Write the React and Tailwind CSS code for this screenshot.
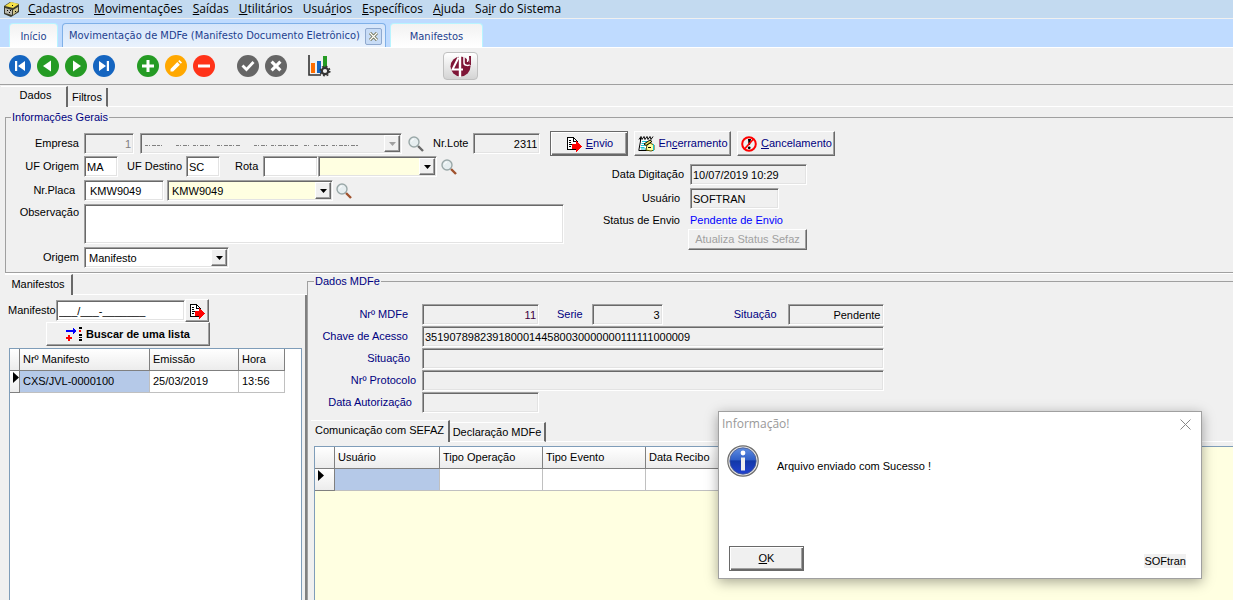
import React from 'react';

const menuItems = [
  ['', 'C', 'adastros'],
  ['', 'M', 'ovimentações'],
  ['', 'S', 'aídas'],
  ['', 'U', 'tilitários'],
  ['Usuá', 'r', 'ios'],
  ['', 'E', 'specíficos'],
  ['', 'A', 'juda'],
  ['Sa', 'i', 'r do Sistema'],
];

const sunken =
  'border border-t-[#a0a0a0] border-l-[#a0a0a0] border-r-white border-b-white shadow-[inset_1px_1px_0_#696969,inset_-1px_-1px_0_#e3e3e3]';
const raised =
  'border border-t-white border-l-white border-r-[#696969] border-b-[#696969] shadow-[inset_-1px_-1px_0_#a0a0a0] bg-[#f0f0f0]';
const raisedDefault =
  'border border-[#696969] shadow-[inset_1px_1px_0_#ffffff,inset_-1px_-1px_0_#696969,inset_-2px_-2px_0_#a0a0a0] bg-[#f0f0f0]';
const groupBox =
  'min-w-0 border border-r-0 border-[#a0a0a0] shadow-[0_1px_0_#ffffff]';

const Field = ({ className = '', pad = 'px-[2px]', ...props }) => (
  <input className={`h-[21px] min-w-0 leading-4 outline-none ${sunken} ${pad} ${className}`} {...props} />
);

const Combo = ({ className = '', selectClass = 'bg-white', value = '', disabled, children, ...props }) => (
  <div className={`relative h-[21px] ${className}`}>
    <select
      className={`block h-full w-full appearance-none px-1 leading-4 outline-none ${sunken} ${selectClass}`}
      defaultValue={value}
      disabled={disabled}
      {...props}
    >
      <option value={value}>{value}</option>
    </select>
    {children}
    <span className={`pointer-events-none absolute top-[2px] right-[2px] bottom-[2px] flex w-4 items-center justify-center ${raised}`}>
      <svg width="7" height="4" viewBox="0 0 7 4" fill={disabled ? '#a0a0a0' : '#000'}>
        <path d="M0 0h7L3.5 4z" />
      </svg>
    </span>
  </div>
);

const Search = ({ handle = '#a0522d', label }) => (
  <button type="button" aria-label={label} className="h-4 w-4 shrink-0">
    <svg width="16" height="16" viewBox="0 0 16 16" fill="none">
      <path d="M10 10l5 5" stroke={handle} strokeWidth="2.4" />
      <circle cx="6" cy="6" r="5" fill="#e6eef0" stroke="#9aa8a8" strokeWidth="1.4" />
      <path d="M3.5 5.5A3 3 0 0 1 6 3" stroke="#fff" />
    </svg>
  </button>
);

const SendIcon = () => (
  <svg width="16" height="16" viewBox="0 0 16 16" shapeRendering="crispEdges">
    <path d="M1 1h6l4 4v8H1z" fill="#fff" stroke="#000" />
    <path d="M7 1v4h4M3 4h2M3 6h2M3 8h3M3 10h2" stroke="#000" fill="none" />
    <path d="M6 8h4V5l6 5.500-6 5.500v-3H6z" fill="#f00" />
  </svg>
);

const NotepadIcon = () => (
  <svg width="17" height="17" viewBox="0 0 17 17" fill="none">
    <path d="M2.500 2.500h12L12 15.500H.5z" fill="#fff" />
    <path d="M2.500 3v3L.8 15.500H11" stroke="#000" />
    <path d="M1 4.500l2-3 1 3 2-3 1 3 2-3 1 3 2-3 1 3 2-3" stroke="#000" />
    <path d="M4 6.500h5M3.500 8.500h3M3 10.500h4M2.500 12.500h4M3 14h5" stroke="#19c5cf" />
    <path d="M9 10l3-2 4 2v5l-3 1-5-1z" fill="#ffffa0" stroke="#555500" />
    <path d="M6 9l6-4 2 1.500-6 4zM10 12.500h3" fill="#e0e060" stroke="#000" />
    <path d="M15.500 9v7" stroke="#19c5cf" />
  </svg>
);

const CancelIcon = () => (
  <svg width="16" height="16" viewBox="0 0 16 16" fill="none">
    <path d="M7 3h3l-1 6H7.500z" fill="#000" />
    <circle cx="8.200" cy="11.800" r="1.400" fill="#000" />
    <circle cx="8" cy="8" r="6.8" stroke="#f00" strokeWidth="2" />
    <path d="M12.500 3L3.500 13" stroke="#f00" strokeWidth="1.700" />
  </svg>
);

const circleIcons = [
  { label: 'Primeiro', color: '#1565c0', d: 'M6 6h2.200v10H6zM16 6v10L9 11z' },
  { label: 'Anterior', color: '#259b24', d: 'M14 5.500v11L6 11z' },
  { label: 'Próximo', color: '#259b24', d: 'M8 5.500v11L16 11z' },
  { label: 'Último', color: '#1565c0', d: 'M13.800 6H16v10h-2.200zM6 6v10l7-5z' },
  { label: 'Incluir', color: '#259b24', d: 'M9.500 5h3v4.500H17v3h-4.500V17h-3v-4.500H5v-3h4.500z', gap: true },
  { label: 'Alterar', color: '#ffa800', d: 'M5.500 16.500v-2.600l6.800-6.800 2.600 2.600-6.800 6.800zM13.200 6.200l1.200-1.200 2.600 2.600-1.200 1.200z' },
  { label: 'Excluir', color: '#ff3319', d: 'M5 9.500h12v3H5z' },
  { label: 'Confirmar', color: '#666666', d: 'M4.500 11.500l2-2 3 3L15.500 6l2 2-8 8.500z', gap: true },
  { label: 'Cancelar', color: '#666666', d: 'M5.500 7.700l2.200-2.200L11 8.800l3.300-3.300 2.200 2.200-3.300 3.300 3.300 3.300-2.200 2.200-3.300-3.300-3.300 3.300-2.200-2.200L8.800 11z' },
];

const AppIcon = () => (
  <svg width="16" height="16" viewBox="0 0 16 16">
    <path d="M0 5l6-4 9 2v8l-8 5-7-3z" fill="#3a3a2c" />
    <path d="M1 5l6-4 8 2-6 4z" fill="#f4e04a" />
    <path d="M1 7l7 2v5l-7-2z" fill="#b8b8b0" />
    <path d="M9 9l5-3v4l-5 4z" fill="#cfc48a" />
    <path d="M3 9h1v1H3zM5 11h1v1H5zM6 9h1v1H6zM11 10h1v1h-1zM8 4h1v1H8z" fill="#000" />
  </svg>
);

const ChartIcon = () => (
  <svg width="23" height="22" viewBox="0 0 23 22" fill="none">
    <path d="M1 0v20h12" stroke="#333" strokeWidth="1.600" />
    <path d="M3 8h4v10H3z" fill="#ff6d00" />
    <path d="M9 6h4v12H9z" fill="#1565c0" />
    <path d="M15 1h4v11h-4z" fill="#259b24" />
    <circle cx="17" cy="16" r="3.200" stroke="#333" strokeWidth="2.200" fill="#f0f0f0" />
    <circle cx="17" cy="16" r="4.800" stroke="#333" strokeWidth="1.500" strokeDasharray="1.900 1.870" />
  </svg>
);

const LogoIcon = () => (
  <svg width="21" height="21" viewBox="0 0 21 21" fill="none">
    <ellipse cx="10.500" cy="10.500" rx="10" ry="10" fill="#7f1637" />
    <path d="M8.500 1.500L2.500 13.500H13" stroke="#fff" strokeWidth="2" />
    <path d="M10 0v21" stroke="#fff" strokeWidth="2.400" />
    <path d="M14 1v6c0 3 6 3 6 1" stroke="#fff" strokeWidth="1.500" />
    <path d="M17.500 0v6" stroke="#fff" strokeWidth="1.200" />
    <path d="M19 0h2v9h-1.500z" fill="#7f1637" />
  </svg>
);

const InfoIcon = () => (
  <svg width="32" height="32" viewBox="0 0 32 32">
    <defs>
      <linearGradient id="infoBlue" x1="0" y1="0" x2="0" y2="1">
        <stop offset="0" stopColor="#5f8de0" />
        <stop offset="0.450" stopColor="#2f5fc8" />
        <stop offset="0.500" stopColor="#1238a8" />
        <stop offset="1" stopColor="#2142d0" />
      </linearGradient>
    </defs>
    <circle cx="16" cy="16" r="15.200" fill="#e8e8e8" stroke="#6c6c6c" strokeWidth="1.200" />
    <circle cx="16" cy="16" r="13.200" fill="url(#infoBlue)" stroke="#4a5a90" strokeWidth="0.800" />
    <circle cx="16" cy="8" r="2.400" fill="#fff" />
    <path d="M14 12.500h4v13h-4z" fill="#eee" />
  </svg>
);

const RowMark = () => (
  <td className="border-r border-b border-[#808080] bg-linear-to-b from-white to-[#ececec] pt-px pl-[3px] align-top">
    <svg width="6" height="11" viewBox="0 0 6 11">
      <path d="M0 0l6 5.500L0 11z" />
    </svg>
  </td>
);

const GridHead = ({ children, className = '' }) => (
  <th className={`h-[22px] border-r border-b border-[#808080] bg-linear-to-b from-white to-[#ececec] px-[3px] text-left font-normal ${className}`}>
    {children}
  </th>
);

const GridCell = ({ children, className = 'bg-white' }) => (
  <td className={`h-[22px] border-r border-b border-[#c0c0c0] px-[3px] ${className}`}>{children}</td>
);

const TopBar = () => (
  <header>
    <nav className="flex h-[18px] items-center bg-[#c3daf0] pl-1 font-['Open_Sans','Noto_Sans',sans-serif] text-[12px] leading-4">
      <AppIcon />
      <div className="ml-2 flex gap-[10px]">
        {menuItems.map(([before, key, after]) => (
          <a href="#" key={key + after} className="whitespace-nowrap">
            {before}<u>{key}</u>{after}
          </a>
        ))}
      </div>
    </nav>
    <div className="flex h-[30px] items-end gap-1 border-t border-b border-t-[#f0f0f0] border-b-white bg-[#bfdbff] pl-[9px] font-['DejaVu_Sans_Condensed','DejaVu_Sans',sans-serif] text-[11px] text-[#1e3f8f]">
      <button type="button" className="h-6 w-[49px] rounded-t-sm border border-b-0 border-[#b8f4ff] bg-linear-to-b from-[#f2f2f2] to-white pt-1">Início</button>
      <div className="flex h-6 w-[324px] items-center justify-between rounded-t-sm border border-b-0 border-[#7fb0e8] bg-linear-to-b from-[#d5e5fa] to-[#e9f2fd] pt-px pr-[3px] pl-[6px]">
        <button type="button" className="pt-px whitespace-nowrap">Movimentação de MDFe (Manifesto Documento Eletrônico)</button>
        <button type="button" aria-label="Fechar aba" className="flex h-[17px] w-[17px] items-center justify-center rounded-xs border border-[#8fa9cf] bg-[#c8dcf6]">
          <svg width="9" height="9" viewBox="0 0 9 9" fill="none">
            <path d="M1 1l7 7M8 1L1 8" stroke="#6b6b4a" strokeWidth="3" />
            <path d="M1 1l7 7M8 1L1 8" stroke="#fff" strokeWidth="1.300" />
          </svg>
        </button>
      </div>
      <button type="button" className="h-6 w-[93px] rounded-t-sm border border-b-0 border-[#b8f4ff] bg-linear-to-b from-[#f2f2f2] to-white pt-1">Manifestos</button>
    </div>
    <div className="flex h-[37px] items-center border-b border-[#a0a0a0] pl-[9px]">
      {circleIcons.map((icon) => (
        <button type="button" key={icon.label} aria-label={icon.label} className={`mr-[6px] h-[22px] w-[22px] ${icon.gap ? 'ml-4' : ''}`}>
          <svg width="22" height="22" viewBox="0 0 22 22">
            <circle cx="11" cy="11" r="11" fill={icon.color} />
            <path d={icon.d} fill="#fff" />
          </svg>
        </button>
      ))}
      <button type="button" aria-label="Gráficos" className="ml-[15px]"><ChartIcon /></button>
      <button type="button" aria-label="4S" className="ml-28 flex h-7 w-[35px] items-center justify-center rounded-sm border border-[#c0c0c0] bg-linear-to-b from-white to-[#d4d4d4]">
        <LogoIcon />
      </button>
    </div>
  </header>
);

const GeneralInfo = () => (
  <fieldset className={`${groupBox} mt-[3px] ml-1 pb-1`}>
    <legend className="ml-[5px] h-[14px] px-px leading-[14px] text-[#000080]">Informações Gerais</legend>
    <div className="flex items-center pt-[7px]">
      <label htmlFor="empresa" className="mr-[5px] w-[73px] text-right">Empresa</label>
      <Field id="empresa" className="w-[50px] text-right text-[#808080]" defaultValue="1" disabled />
      <Combo aria-label="Nome da empresa" className="ml-[6px] w-[262px]" selectClass="bg-[#f0f0f0] text-[#808080] opacity-100" disabled value="">
        <svg className="pointer-events-none absolute top-3 left-0" width="220" height="1" viewBox="0 0 220 1">
          <path
            d="M5 .5h18M36 .5h13M53 .5h18M77 .5h23M114 .5h13M131 .5h28M164 .5h6M174 .5h14M192 .5h26"
            stroke="#808080"
            strokeDasharray="3 1 1 2 4 1"
          />
        </svg>
      </Combo>
      <span className="mx-[6px] flex"><Search handle="#696969" label="Pesquisar empresa" /></span>
      <label htmlFor="lote" className="mr-[5px] ml-[3px]">Nr.Lote</label>
      <Field id="lote" className="w-[67px] text-right" defaultValue="2311" readOnly />
      <div className="ml-[10px] flex gap-[6px] text-[#000080]">
        <button type="button" className={`flex h-[25px] w-[78px] items-center justify-center gap-1 ${raisedDefault}`}>
          <SendIcon /><span><u>E</u>nvio</span>
        </button>
        <button type="button" className={`flex h-[25px] w-[97px] items-center justify-center gap-[3px] ${raised}`}>
          <NotepadIcon /><span>En<u>c</u>erramento</span>
        </button>
        <button type="button" className={`flex h-[25px] w-[98px] items-center justify-center gap-1 ${raised}`}>
          <CancelIcon /><span><u>C</u>ancelamento</span>
        </button>
      </div>
    </div>
    <div className="flex">
      <div className="flex flex-col gap-[3px]">
        <div className="flex items-center">
          <label htmlFor="ufOrigem" className="mr-[5px] w-[73px] text-right">UF Origem</label>
          <Field id="ufOrigem" className="w-[34px] bg-white" defaultValue="MA" />
          <label htmlFor="ufDestino" className="mr-1 ml-[9px]">UF Destino</label>
          <Field id="ufDestino" className="w-[34px] bg-white" defaultValue="SC" />
          <label htmlFor="rota" className="mr-[5px] ml-[15px]">Rota</label>
          <Field id="rota" className="w-[55px] bg-white" />
          <Combo aria-label="Nome da rota" className="mr-1 w-[119px]" selectClass="bg-[#ffffe1]" />
          <Search label="Pesquisar rota" />
        </div>
        <div className="flex items-center">
          <label htmlFor="placa" className="mr-[5px] w-[73px] pr-1 text-right">Nr.Placa</label>
          <Field id="placa" className="w-20 bg-white" pad="px-[5px]" defaultValue="KMW9049" />
          <Combo aria-label="Veículo" className="mr-[3px] ml-[3px] w-[166px]" selectClass="bg-[#ffffe1]" value="KMW9049" />
          <Search label="Pesquisar placa" />
        </div>
        <div className="flex">
          <label htmlFor="obs" className="mr-[5px] w-[73px] text-right leading-4">Observação</label>
          <textarea id="obs" className={`h-10 w-[480px] resize-none bg-white px-1 outline-none ${sunken}`} />
        </div>
        <div className="flex items-center">
          <label htmlFor="origem" className="mr-[5px] w-[73px] text-right">Origem</label>
          <Combo id="origem" className="w-[145px]" selectClass="bg-white" value="Manifesto" />
        </div>
      </div>
      <div className="flex flex-col gap-[3px] pt-2">
        <div className="flex items-center">
          <label htmlFor="digitacao" className="mr-[6px] w-[120px] text-right">Data Digitação</label>
          <Field id="digitacao" className="w-[117px]" defaultValue="10/07/2019 10:29" readOnly />
        </div>
        <div className="flex items-center">
          <label htmlFor="usuario" className="mr-[6px] w-[120px] pr-1 text-right">Usuário</label>
          <Field id="usuario" className="w-[89px]" defaultValue="SOFTRAN" readOnly />
        </div>
        <div className="flex leading-4">
          <span className="mr-[6px] w-[120px] pr-1 text-right">Status de Envio</span>
          <span className="text-[#0000ff]">Pendente de Envio</span>
        </div>
        <button type="button" disabled className={`-mt-[2px] ml-[124px] h-[21px] w-[119px] text-[#a0a0a0] ${raised}`}>Atualiza Status Sefaz</button>
      </div>
    </div>
  </fieldset>
);

const ManifestList = () => (
  <section className="flex w-[302px] shrink-0 flex-col">
    <div className="flex h-[21px]">
      <button type="button" className="w-[68px] border-t border-r-2 border-t-white border-r-[#696969] pb-px">Manifestos</button>
      <span className="flex-1 border-b border-white" />
    </div>
    <div className="flex flex-1 flex-col border-r-2 border-[#808080] pl-[3px]">
      <div className="flex items-center pt-1">
        <label htmlFor="manifesto" className="w-12">Manifesto</label>
        <Field id="manifesto" className="w-[129px] bg-white" defaultValue="___/___-_______" />
        <button type="button" aria-label="Carregar manifesto" className={`flex h-[23px] w-6 items-center justify-center ${raised}`}><SendIcon /></button>
      </div>
      <button type="button" className={`ml-[38px] flex h-6 w-[164px] items-center justify-center gap-1 font-bold ${raised}`}>
        <svg width="16" height="14" viewBox="0 0 16 14" shapeRendering="crispEdges">
          <path d="M0 3h7V1l4 3-4 3V5H0z" fill="#00f" />
          <path d="M2 8h2v2h2v2H4v2H2v-2H0v-2h2z" fill="#f00" />
          <path d="M13 0h3v2h-3zM13 7h3v2h-3zM13 10h3v1h-3zM13 12h3v2h-3z" />
          <path d="M13 3h2v2h-2z" fill="#f00" />
        </svg>
        Buscar de uma lista
      </button>
      <div className="mt-[2px] mr-[3px] ml-px flex-1 border border-b-0 border-[#7f9db9] bg-white">
        <table className="table-fixed border-separate border-spacing-0">
          <thead>
            <tr>
              <GridHead className="w-[10px]" />
              <GridHead className="w-[130px]">Nrº Manifesto</GridHead>
              <GridHead className="w-[89px]">Emissão</GridHead>
              <GridHead className="w-[46px]">Hora</GridHead>
            </tr>
          </thead>
          <tbody>
            <tr>
              <RowMark />
              <GridCell className="bg-[#b5c9e8]">CXS/JVL-0000100</GridCell>
              <GridCell>25/03/2019</GridCell>
              <GridCell>13:56</GridCell>
            </tr>
          </tbody>
        </table>
      </div>
    </div>
  </section>
);

const mdfeRows = [
  { id: 'chave', label: 'Chave de Acesso', value: '35190789823918000144580030000000111111000009', pad: 'pr-2', width: 'w-[462px]' },
  { id: 'situacao', label: 'Situação', value: '', pad: 'pr-[6px]', width: 'w-[462px]' },
  { id: 'protocolo', label: 'Nrº Protocolo', value: '', pad: 'pr-0', width: 'w-[462px]' },
  { id: 'autorizacao', label: 'Data Autorização', value: '', pad: 'pr-1', width: 'w-[117px]' },
];

const MdfeData = () => (
  <fieldset className={`${groupBox} flex flex-1 flex-col border-b-0`}>
    <legend className="ml-[6px] h-[14px] px-px leading-[14px] text-[#000080]">Dados MDFe</legend>
    <div className="flex flex-col gap-px pt-4">
      <div className="flex items-center">
        <label htmlFor="mdfe" className="mr-[6px] w-[108px] pr-2 text-right text-[#000080]">Nrº MDFe</label>
        <Field id="mdfe" className="w-[117px] text-right text-[#400040]" defaultValue="11" readOnly />
        <label htmlFor="serie" className="mr-[9px] ml-[18px] text-[#000080]">Serie</label>
        <Field id="serie" className="w-[71px] text-right" defaultValue="3" readOnly />
        <label htmlFor="status" className="mr-[11px] ml-[71px] text-[#000080]">Situação</label>
        <Field id="status" className="w-[96px] text-right" defaultValue="Pendente" readOnly />
      </div>
      {mdfeRows.map((row) => (
        <div key={row.id} className="flex items-center">
          <label htmlFor={row.id} className={`mr-[6px] w-[108px] text-right text-[#000080] ${row.pad}`}>{row.label}</label>
          <Field id={row.id} className={row.width} defaultValue={row.value} readOnly />
        </div>
      ))}
    </div>
    <div className="mt-[7px] ml-[3px] flex h-[22px] items-end">
      <button type="button" className="h-[22px] w-[139px] border-t border-r-2 border-t-white border-r-[#696969] pb-[2px]">Comunicação com SEFAZ</button>
      <button type="button" className="h-5 w-[96px] border-t border-r-2 border-b border-t-white border-r-[#696969] border-b-white">Declaração MDFe</button>
      <span className="flex-1 border-b border-white" />
    </div>
    <div className="mt-[4px] ml-[6px] flex-1 border border-r-0 border-b-0 border-[#7f9db9] bg-[#ffffe1]">
      <table className="table-fixed border-separate border-spacing-0">
        <thead>
          <tr>
            <GridHead className="w-5" />
            <GridHead className="w-[105px]">Usuário</GridHead>
            <GridHead className="w-[103px]">Tipo Operação</GridHead>
            <GridHead className="w-[103px]">Tipo Evento</GridHead>
            <GridHead className="w-[103px]">Data Recibo</GridHead>
          </tr>
        </thead>
        <tbody>
          <tr>
            <RowMark />
            <GridCell className="bg-[#b5c9e8]" />
            <GridCell />
            <GridCell />
            <GridCell />
          </tr>
        </tbody>
      </table>
    </div>
  </fieldset>
);

const InfoDialog = () => (
  <div role="dialog" aria-label="Informação!" className="absolute right-[31px] bottom-[21px] flex h-[168px] w-[484px] flex-col border border-[#a0a0a0] bg-white shadow-[0_3px_12px_rgba(0,0,0,0.35)]">
    <div className="flex h-6 items-center justify-between pr-[10px] pl-[3px] font-['Open_Sans','Noto_Sans',sans-serif] text-[12px] text-[#999999]">
      <span>Informação!</span>
      <button type="button" aria-label="Fechar">
        <svg width="11" height="11" viewBox="0 0 11 11" stroke="#888"><path d="M0.500 0.500l10 10M10.500 0.500l-10 10" /></svg>
      </button>
    </div>
    <div className="flex flex-1 items-start pt-[9px] pl-2">
      <InfoIcon />
      <p className="mt-[14px] ml-[18px] leading-[14px]">Arquivo enviado com Sucesso !</p>
    </div>
    <div className="flex items-end justify-between pr-[15px] pb-[7px] pl-[10px]">
      <button type="button" className={`h-[25px] w-[75px] ${raisedDefault}`}><u>O</u>K</button>
      <span className="mb-[3px] bg-[#f0f0f0] leading-[14px]">SOFtran</span>
    </div>
  </div>
);

const App = () => {
  return (
    <div className="relative flex min-h-screen flex-col overflow-hidden bg-[#f0f0f0] font-['Liberation_Sans',Arial,sans-serif] text-[11px] text-black">
      <TopBar />
      <main className="flex flex-1 flex-col pl-px">
        <div className="flex h-[22px] items-end">
          <button type="button" className="h-[21px] w-[67px] border-t border-r-2 border-t-white border-r-[#696969] pb-1 pl-1">Dados</button>
          <button type="button" className="h-[19px] w-10 border-r-2 border-b border-r-[#696969] border-b-white">Filtros</button>
          <span className="flex-1 border-b border-white" />
        </div>
        <GeneralInfo />
        <div className="flex flex-1 pt-px pl-1">
          <ManifestList />
          <MdfeData />
        </div>
      </main>
      <InfoDialog />
    </div>
  );
};

export default App;
